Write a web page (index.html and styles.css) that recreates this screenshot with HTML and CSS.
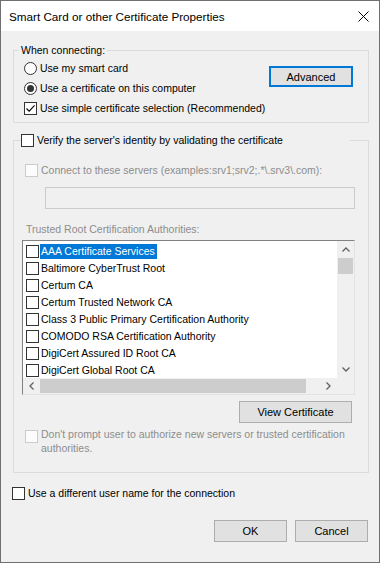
FILE: index.html
```html
<!DOCTYPE html>
<html>
    <head>
        <title>Smart Card or other Certificate Properties</title>
        <meta charset="UTF-8">
        <link rel="stylesheet" href="styles.css">
    </head>
    <body>
        <div class="dialog">
            <div class="titlebar">
                <span class="title">Smart Card or other Certificate Properties</span>
                <svg class="close" viewBox="0 0 11 11"><path d="M0.5 0.5L10.5 10.5M10.5 0.5L0.5 10.5"/></svg>
            </div>

            <div class="content">
                <fieldset class="group">
                    <legend class="legend-text">When connecting:</legend>
                    <div class="connect-body">
                        <div class="options">
                            <div class="row"><span class="radio"></span>Use my smart card</div>
                            <div class="row"><span class="radio on"></span>Use a certificate on this computer</div>
                            <div class="row">
                                <span class="check"><svg class="tick" viewBox="0 0 11 11"><path d="M1.5 5.5L4.2 8.2L9.6 2.4"/></svg></span>
                                Use simple certificate selection (Recommended)
                            </div>
                        </div>
                        <button class="btn btn-default">Advanced</button>
                    </div>
                </fieldset>

                <fieldset class="group group-verify">
                    <legend class="legend-check"><span class="check"></span>Verify the server's identity by validating the certificate</legend>
                    <div class="verify-body">
                        <div class="row disabled servers"><span class="check off"></span>Connect to these servers (examples:srv1;srv2;.*\.srv3\.com):</div>
                        <div class="input"></div>
                        <div class="caption">Trusted Root Certification Authorities:</div>

                        <div class="list">
                            <div class="items">
                                <div class="item"><span class="check"></span><span class="name selected">AAA Certificate Services</span></div>
                                <div class="item"><span class="check"></span><span class="name">Baltimore CyberTrust Root</span></div>
                                <div class="item"><span class="check"></span><span class="name">Certum CA</span></div>
                                <div class="item"><span class="check"></span><span class="name">Certum Trusted Network CA</span></div>
                                <div class="item"><span class="check"></span><span class="name">Class 3 Public Primary Certification Authority</span></div>
                                <div class="item"><span class="check"></span><span class="name">COMODO RSA Certification Authority</span></div>
                                <div class="item"><span class="check"></span><span class="name">DigiCert Assured ID Root CA</span></div>
                                <div class="item"><span class="check"></span><span class="name">DigiCert Global Root CA</span></div>
                            </div>
                            <div class="vscroll">
                                <div class="arrow"><svg class="chev" viewBox="0 0 8 5"><path d="M0.5 4.5L4 1L7.5 4.5"/></svg></div>
                                <div class="vthumb"></div>
                                <div class="spacer"></div>
                                <div class="arrow"><svg class="chev" viewBox="0 0 8 5"><path d="M0.5 0.5L4 4L7.5 0.5"/></svg></div>
                            </div>
                            <div class="hscroll">
                                <div class="arrow"><svg class="chev-h" viewBox="0 0 5 8"><path d="M4.5 0.5L1 4L4.5 7.5"/></svg></div>
                                <div class="hthumb"></div>
                                <div class="spacer"></div>
                                <div class="arrow"><svg class="chev-h" viewBox="0 0 5 8"><path d="M0.5 0.5L4 4L0.5 7.5"/></svg></div>
                            </div>
                            <div class="corner"></div>
                        </div>

                        <div class="view-row"><button class="btn btn-view">View Certificate</button></div>

                        <div class="prompt disabled">
                            <span class="check off"></span>
                            <span>Don't prompt user to authorize new servers or trusted certification authorities.</span>
                        </div>
                    </div>
                </fieldset>

                <div class="row other-user"><span class="check"></span>Use a different user name for the connection</div>

                <div class="actions">
                    <button class="btn">OK</button>
                    <button class="btn">Cancel</button>
                </div>
            </div>
        </div>
    </body>
</html>
```

FILE: styles.css
```css
body{
    margin:0px;
    background-color:#f0f0f0;
}
.dialog{
    width:380px;
    height:563px;
    box-sizing:border-box;
    border:1px solid #6f6f6f;
    background-color:#f0f0f0;
    font-family:"Liberation Sans", Arial, sans-serif;
    font-size:10.5px;
    color:#000;
    display:flex;
    flex-direction:column;
}
.titlebar{
    height:30px;
    flex:none;
    background-color:#fff;
    display:flex;
    align-items:center;
    justify-content:space-between;
    padding:0 10px 0 8px;
}
.title{
    font-size:11.7px;
}
.close{
    width:11px;
    height:11px;
    fill:none;
    stroke:#000;
    stroke-width:1;
}
.content{
    padding:12px 10px 0 12px;
    display:flex;
    flex-direction:column;
}

/* group boxes */
.group{
    margin:0;
    border:1px solid #dcdcdc;
    padding:0 13px 0 10px;
    min-width:0;
}
.legend-text{
    padding:0 2px;
    margin-left:-5px;
    line-height:15px;
}
.connect-body{
    display:flex;
    justify-content:space-between;
    align-items:flex-start;
    padding-bottom:4px;
}
.group-verify{
    margin-top:9px;
}
.legend-check{
    padding:0;
    margin-left:-3px;
    width:329px;
    height:16px;
    display:flex;
    align-items:center;
    gap:3px;
}
.verify-body{
    display:flex;
    flex-direction:column;
    padding-bottom:17px;
}

/* rows, checkboxes, radios */
.row{
    display:flex;
    align-items:center;
    height:20px;
    gap:3px;
    white-space:nowrap;
}
.check{
    width:13px;
    height:13px;
    box-sizing:border-box;
    border:1px solid #333;
    background-color:#fff;
    flex:none;
    display:flex;
    align-items:center;
    justify-content:center;
}
.check.off{
    border-color:#cccccc;
    background-color:#fcfcfc;
}
.tick{
    width:11px;
    height:11px;
    fill:none;
    stroke:#000;
    stroke-width:1.1;
}
.radio{
    width:13px;
    height:13px;
    box-sizing:border-box;
    border:1px solid #333;
    border-radius:50%;
    background-color:#fff;
    flex:none;
    display:flex;
    align-items:center;
    justify-content:center;
}
.radio.on::after{
    content:"";
    width:7px;
    height:7px;
    border-radius:50%;
    background-color:#333;
}
.disabled{
    color:#8d8d8d;
}
.servers{
    margin-top:12px;
    margin-left:1px;
}
.input{
    margin:7px 0 0 21px;
    width:310px;
    height:22px;
    box-sizing:border-box;
    border:1px solid #cccccc;
    background-color:#f0f0f0;
}
.caption{
    margin:13px 0 0 2px;
    line-height:15px;
    color:#8d8d8d;
}

/* certificate list */
.list{
    margin:3px 0 0 -2px;
    width:333px;
    height:155px;
    box-sizing:border-box;
    border:1px solid;
    border-color:#828282 #e3e3e3 #e3e3e3 #828282;
    background-color:#fff;
    display:grid;
    grid-template-columns:1fr 17px;
    grid-template-rows:1fr 16px;
}
.items{
    padding-top:2px;
    overflow:hidden;
}
.item{
    display:flex;
    align-items:center;
    height:17px;
    padding-left:3px;
    gap:1px;
    white-space:nowrap;
}
.name{
    padding:0 2px 0 1px;
    line-height:15px;
}
.name.selected{
    background-color:#0078d7;
    color:#fff;
}
.vscroll{
    background-color:#f0f0f0;
    display:flex;
    flex-direction:column;
}
.hscroll{
    background-color:#f0f0f0;
    display:flex;
}
.corner{
    background-color:#f0f0f0;
}
.vscroll .arrow{
    height:17px;
    display:flex;
    align-items:center;
    justify-content:center;
}
.hscroll .arrow{
    width:17px;
    display:flex;
    align-items:center;
    justify-content:center;
}
.spacer{
    flex:1;
}
.vthumb{
    height:16px;
    margin:0 1px;
    background-color:#cdcdcd;
}
.hthumb{
    width:266px;
    margin:1px 0;
    background-color:#cdcdcd;
}
.chev{
    width:8px;
    height:5px;
    fill:none;
    stroke:#606060;
    stroke-width:1.3;
}
.chev-h{
    width:5px;
    height:8px;
    fill:none;
    stroke:#606060;
    stroke-width:1.3;
}

/* buttons */
.btn{
    font-family:inherit;
    font-size:11px;
    color:#000;
    background-color:#e1e1e1;
    border:1px solid #adadad;
    width:73px;
    height:22px;
    padding:0;
    flex:none;
}
.btn-default{
    width:84px;
    height:21px;
    margin:8px 2px 0 0;
    border-color:#0078d7;
    box-shadow:inset 0 0 0 1px #0078d7;
}
.view-row{
    display:flex;
    justify-content:flex-end;
    margin-top:6px;
}
.btn-view{
    width:113px;
    margin-right:3px;
}
.prompt{
    display:flex;
    gap:3px;
    margin:4px 0 0 1px;
    line-height:14px;
}
.prompt .check{
    margin-top:3px;
}
.prompt span:last-child{
    width:312px;
}
.other-user{
    margin:10px 0 0 -1px;
}
.actions{
    display:flex;
    justify-content:flex-end;
    gap:8px;
    margin:17px 1px 0 0;
}
```
